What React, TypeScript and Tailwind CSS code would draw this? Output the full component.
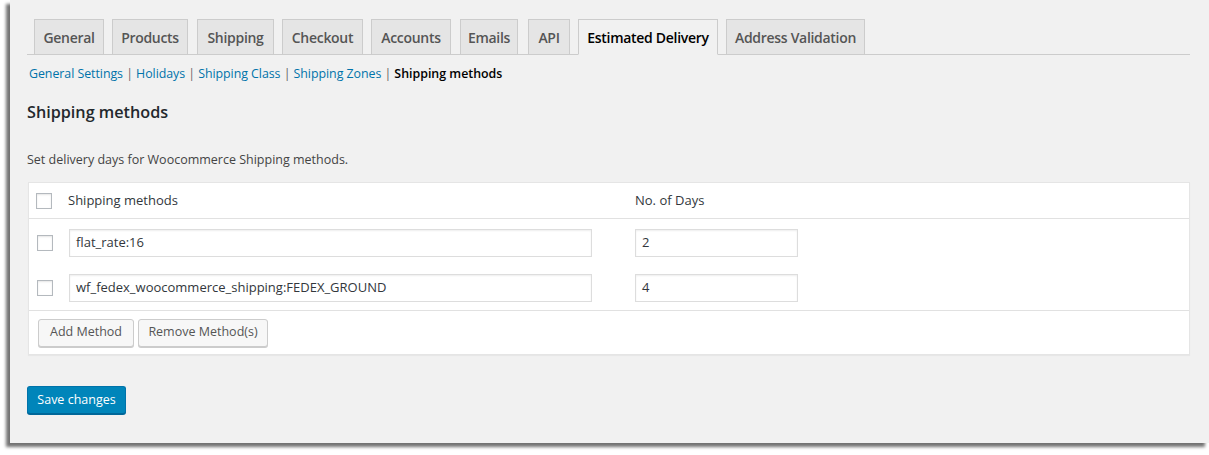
const tabs = [
  { label: "General", cls: "w-[70px]" },
  { label: "Products", cls: "w-[76px] ml-[8px]" },
  { label: "Shipping", cls: "w-[77px] ml-[9px]" },
  { label: "Checkout", cls: "w-[81px] ml-[8px]" },
  { label: "Accounts", cls: "w-[80px] ml-[8px]" },
  { label: "Emails", cls: "w-[58px] ml-[9px]" },
  { label: "API", cls: "w-[42px] ml-[10px]" },
  { label: "Estimated Delivery", cls: "w-[140px] ml-[8px]", active: true },
  { label: "Address Validation", cls: "w-[139px] ml-[8px]" },
];

const subLinks = ["General Settings", "Holidays", "Shipping Class", "Shipping Zones"];

const rows = [
  { method: "flat_rate:16", days: "2" },
  { method: "wf_fedex_woocommerce_shipping:FEDEX_GROUND", days: "4" },
];

function Checkbox() {
  return (
    <span className="block w-4 h-4 border border-[#b4b9be] bg-white shadow-[inset_0_1px_2px_rgba(0,0,0,0.1)]" />
  );
}

export default function App() {
  return (
    <div className="w-[1209px] h-[455px] bg-white overflow-hidden font-['Open_Sans','Noto_Sans',sans-serif] text-[13px] text-[#444]">
      {/* Screenshot panel */}
      <div className="ml-[10px] w-[1199px] h-[443px] bg-[#f1f1f1] shadow-[-4px_4px_3px_rgba(0,0,0,0.55)] pt-[19px] pl-[17px] pr-[19px]">
        {/* Tabs */}
        <div className="flex items-end pl-[7px] border-b border-[#ccc] h-[36px]">
          {tabs.map((t) => (
            <div
              key={t.label}
              className={`${t.cls} h-[36px] -mb-px flex items-center justify-center border border-[#ccc] text-[14px] font-semibold tracking-[-0.3px] ${
                t.active ? "bg-[#f1f1f1] border-b-[#f1f1f1] text-black" : "bg-[#e5e5e5] border-b-[#ccc] text-[#555]"
              }`}
            >
              {t.label}
            </div>
          ))}
        </div>

        {/* Sub navigation */}
        <div className="mt-[10px] pl-[2px] leading-[18px] text-[12.4px] flex items-center whitespace-pre">
          {subLinks.map((l) => (
            <span key={l} className="flex tracking-[-0.05px]">
              <span className="text-[#0073aa]">{l}</span>
              <span className="text-[#666]"> | </span>
            </span>
          ))}
          <span className="font-semibold text-black">Shipping methods</span>
        </div>

        {/* Heading */}
        <h2 className="mt-[17px] text-[16.2px] font-semibold text-[#23282d] leading-[24px]">Shipping methods</h2>

        <p className="mt-[27px] text-[12.5px] text-[#444] leading-[18px]">
          Set delivery days for Woocommerce Shipping methods.
        </p>

        {/* Table */}
        <div className="mt-[13px] ml-px bg-white border border-[#e5e5e5] shadow-[0_1px_1px_rgba(0,0,0,0.04)]">
          <div className="flex items-center h-[36px] border-b border-[#e1e1e1] pl-[7px] text-[#32373c]">
            <Checkbox />
            <span className="ml-[16px] w-[567px]">Shipping methods</span>
            <span>No. of Days</span>
          </div>
          <div className="pt-px">
            {rows.map((r) => (
              <div key={r.method} className="flex items-center h-[45px] pl-[8px]">
                <Checkbox />
                <div className="ml-[16px] w-[523px] h-[28px] border border-[#ddd] bg-white shadow-[inset_0_1px_2px_rgba(0,0,0,0.07)] flex items-center px-[6px] text-[#32373c]">
                  {r.method}
                </div>
                <div className="ml-[43px] w-[163px] h-[28px] border border-[#ddd] bg-white shadow-[inset_0_1px_2px_rgba(0,0,0,0.07)] flex items-center px-[6px] text-[#32373c]">
                  {r.days}
                </div>
              </div>
            ))}
          </div>
          <div className="flex items-center gap-1 h-[44px] border-t border-[#e1e1e1] pl-[9px] text-[12.5px]">
            <button className="w-[96px] h-[28px] rounded-[3px] border border-[#ccc] bg-[#f7f7f7] text-[#555] shadow-[0_1px_0_#ccc]">
              Add Method
            </button>
            <button className="w-[130px] h-[28px] rounded-[3px] border border-[#ccc] bg-[#f7f7f7] text-[#555] shadow-[0_1px_0_#ccc]">
              Remove Method(s)
            </button>
          </div>
        </div>

        <button className="mt-[31px] w-[99px] h-[28px] rounded-[3px] border border-[#0073aa] border-b-[#006799] bg-[#0085ba] text-white text-[12.5px] shadow-[0_1px_0_#006799]">
          Save changes
        </button>
      </div>
    </div>
  );
}
